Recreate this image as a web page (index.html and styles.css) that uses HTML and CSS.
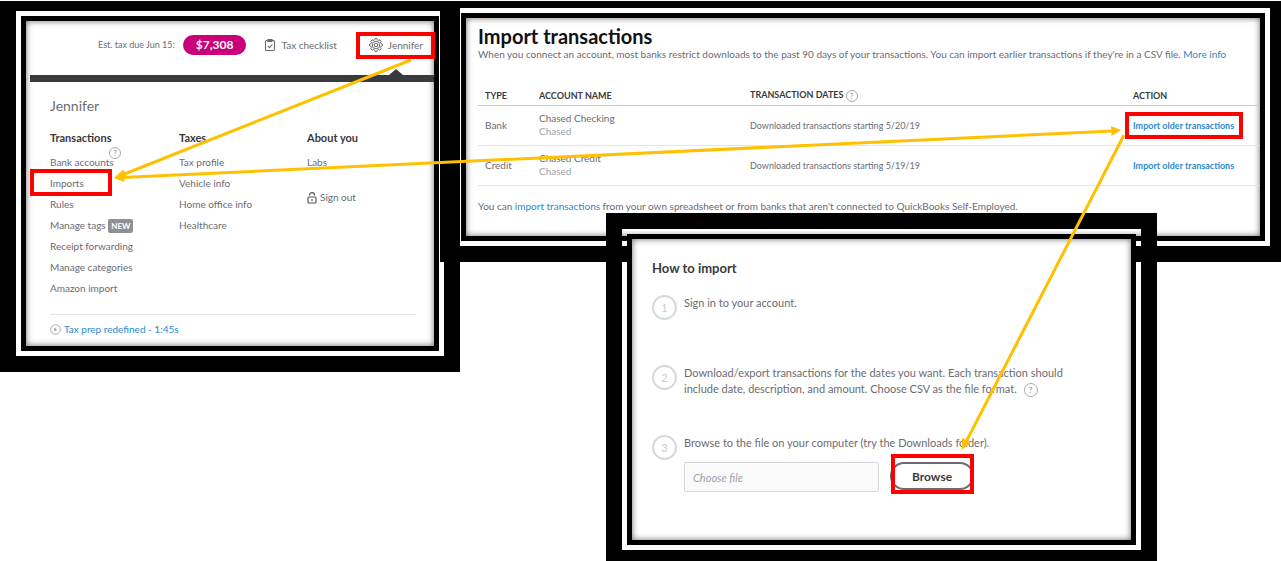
FILE: index.html
```html
<!DOCTYPE html>
<html lang="en">
<head>
  <meta charset="UTF-8" />
  <title>Import older transactions</title>
  <link rel="stylesheet" href="styles.css">
</head>
<body>
  <main class="canvas">

    <!-- Settings menu -->
    <section class="frame frame-menu">
      <div class="screen">
        <header class="topbar">
          <span class="tax-due">Est. tax due Jun 15:</span>
          <a class="amount" href="#">$7,308</a>
          <a class="top-link checklist" href="#">
            <svg width="12" height="14" viewBox="0 0 12 14" fill="none" stroke="#6b6c72" stroke-width="1.1">
              <rect x="1.5" y="2.5" width="9" height="10" rx="1" />
              <path d="M4 3.5V1.5h4v2z" fill="#6b6c72" />
              <path d="M4 8l1.5 1.6L8.3 6.5" />
            </svg>
            Tax checklist
          </a>
          <a class="top-link profile" href="#">
            <svg width="14" height="14" viewBox="0 0 14 14" fill="none" stroke="#6b6c72" stroke-width="1">
              <path d="M5.7 1.8 6.1.6h1.8l.4 1.2 1.5.6 1.1-.5 1.3 1.3-.6 1.1.6 1.5 1.2.4v1.6l-1.2.4-.6 1.5.6 1.1-1.3 1.3-1.1-.6-1.5.7-.4 1.2H6.1l-.4-1.2-1.5-.7-1.1.6-1.3-1.3.6-1.1-.6-1.5-1.2-.4V6.2l1.2-.4.6-1.5-.6-1.1 1.3-1.3 1.1.5z" />
              <circle cx="7" cy="7" r="3.8" />
              <circle cx="7" cy="7" r="1.8" />
            </svg>
            Jennifer
          </a>
        </header>
        <div class="menu">
          <h2 class="menu-name">Jennifer</h2>
          <nav class="menu-columns">
            <div>
              <h3>Transactions</h3>
              <ul>
                <li class="has-help"><a href="#">Bank accounts</a><button class="help help-over" aria-label="Help">?</button></li>
                <li><a href="#">Imports</a></li>
                <li><a href="#">Rules</a></li>
                <li><a href="#">Manage tags</a> <span class="badge">NEW</span></li>
                <li><a href="#">Receipt forwarding</a></li>
                <li><a href="#">Manage categories</a></li>
                <li><a href="#">Amazon import</a></li>
              </ul>
            </div>
            <div>
              <h3>Taxes</h3>
              <ul>
                <li><a href="#">Tax profile</a></li>
                <li><a href="#">Vehicle info</a></li>
                <li><a href="#">Home office info</a></li>
                <li><a href="#">Healthcare</a></li>
              </ul>
            </div>
            <div>
              <h3>About you</h3>
              <ul>
                <li><a href="#">Labs</a></li>
                <li class="sign-out">
                  <a href="#">
                    <svg width="10" height="12" viewBox="0 0 10 12" fill="none" stroke="#55565b" stroke-width="1.2">
                      <rect x="1" y="5" width="8" height="6" rx="1" />
                      <path d="M2.5 3.5V3a2.5 2.3 0 0 1 5 0v.5M5 7v2" />
                    </svg>
                    Sign out
                  </a>
                </li>
              </ul>
            </div>
          </nav>
          <a class="video-link" href="#">
            <svg width="11" height="11" viewBox="0 0 11 11">
              <circle cx="5.5" cy="5.5" r="4.8" fill="none" stroke="#a9abb0" />
              <path d="M4.3 3.7v3.6l2.8-1.8z" fill="#8d9096" />
            </svg>
            Tax prep redefined - 1:45s
          </a>
        </div>
      </div>
    </section>

    <!-- Import transactions -->
    <section class="frame frame-import">
      <div class="screen import">
        <h1>Import transactions</h1>
        <p>When you connect an account, most banks restrict downloads to the past 90 days of your transactions. You can import earlier transactions if they're in a CSV file. <a href="#">More info</a></p>
        <table>
          <thead>
            <tr>
              <th class="col-type">Type</th>
              <th class="col-name">Account name</th>
              <th class="col-dates">Transaction dates <button class="help" aria-label="Help">?</button></th>
              <th>Action</th>
            </tr>
          </thead>
          <tbody>
            <tr>
              <td>Bank</td>
              <td>Chased Checking<br><span class="muted">Chased</span></td>
              <td class="dates">Downloaded transactions starting 5/20/19</td>
              <td><a class="action" href="#">Import older transactions</a></td>
            </tr>
            <tr>
              <td>Credit</td>
              <td>Chased Credit<br><span class="muted">Chased</span></td>
              <td class="dates">Downloaded transactions starting 5/19/19</td>
              <td><a class="action" href="#">Import older transactions</a></td>
            </tr>
          </tbody>
        </table>
        <p>You can <a href="#">import transactions</a> from your own spreadsheet or from banks that aren't connected to QuickBooks Self-Employed.</p>
      </div>
    </section>

    <!-- How to import -->
    <section class="frame frame-steps">
      <div class="screen steps">
        <h2>How to import</h2>
        <ol>
          <li><span class="number">1</span><div>Sign in to your account.</div></li>
          <li><span class="number">2</span><div>Download/export transactions for the dates you want. Each transaction should<br>include date, description, and amount. Choose CSV as the file format. <button class="help help-large" aria-label="Help">?</button></div></li>
          <li>
            <span class="number">3</span>
            <div>
              <label for="file">Browse to the file on your computer (try the Downloads folder).</label>
              <div class="file-row">
                <input type="text" id="file" placeholder="Choose file">
                <button class="browse">Browse</button>
              </div>
            </div>
          </li>
        </ol>
      </div>
    </section>

    <!-- Highlights and arrows over the screens -->
    <svg class="marks" width="1281" height="561" viewBox="0 0 1281 561" aria-hidden="true">
      <g fill="none" stroke="#ff0000" stroke-width="4">
        <rect x="358" y="34" width="75" height="23" />
        <rect x="32" y="171" width="78" height="23" />
        <rect x="1127" y="114" width="114" height="23" />
        <rect x="893" y="456" width="79" height="36" />
      </g>
      <g stroke="#ffc000" stroke-width="3">
        <path d="M411 60 122 175M122 177.500 1113 131M1124 135 966 442" />
      </g>
      <g fill="#ffc000">
        <path d="M114 178 123.500 169.500 127 178.500z" />
        <path d="M114 178 124 173 124.500 182z" />
        <path d="M1121 130 1111 126 1111.500 136z" />
        <path d="M962 450 962 438 971 442z" />
      </g>
    </svg>
  </main>
</body>
</html>
```

FILE: styles.css
```css
* {
  box-sizing: border-box;
}
body {
  margin: 0;
  background: #fff;
  color: #6b6c72;
  font-family: Lato, sans-serif;
  font-size: 10px;
  line-height: 16px;
}
h1, h2, h3, p, ul, ol {
  margin: 0;
  padding: 0;
}
ul, ol {
  list-style: none;
}
a {
  color: #2b8acb;
  text-decoration: none;
}
button, input {
  font-family: inherit;
}
.canvas {
  position: relative;
  min-height: 100vh;
  overflow: hidden;
  border-top: 1px solid #fff;
}

/* double black frame, the gap between the lines is see-through */
.frame {
  position: absolute;
  display: grid;
  padding: 5px;
  border: 16px solid #000;
}
.frame-menu {
  left: 0;
  top: -6px;
  width: 460px;
  min-height: 377px;
}
.frame-import {
  left: 440px;
  top: -9px;
  width: 846px;
  min-height: 270px;
}
.frame-steps {
  left: 606px;
  top: 212px;
  width: 551px;
  min-height: 353px;
}
.screen {
  border: 5px solid #000;
  background: #fff;
  box-shadow: inset 0 0 6px rgba(0, 0, 0, 0.6);
}

.topbar {
  display: flex;
  align-items: center;
  justify-content: flex-end;
  height: 54px;
  padding: 0 11px 7px 0;
}
.tax-due {
  margin-right: 8px;
  font-size: 9px;
}
.amount {
  padding: 2px 13px;
  border-radius: 10px;
  background: #c9007a;
  color: #fff;
  font-size: 12px;
  font-weight: bold;
}
.top-link {
  display: flex;
  align-items: center;
  gap: 5px;
  color: #6b6c72;
}
.checklist {
  margin: 0 32px 0 18px;
}
.menu {
  position: relative;
  margin-left: 4px;
  padding: 16px 18px 0 20px;
  border-top: 7px solid #393a3d;
}
.menu::before {
  content: "";
  position: absolute;
  right: 31px;
  top: -13px;
  border: 7px solid transparent;
  border-top: 0;
  border-bottom: 6px solid #393a3d;
}
.menu-name {
  font-size: 14px;
  font-weight: normal;
}
.menu-columns {
  display: grid;
  grid-template-columns: 129px 128px 1fr;
  height: 184px;
  margin-top: 16px;
}
.menu h3 {
  margin-bottom: 6px;
  color: #393a3d;
  font-size: 11px;
}
.menu li {
  height: 21px;
  line-height: 21px;
}
.menu li a {
  color: #6b6c72;
}
.has-help {
  position: relative;
}
.help {
  display: inline-flex;
  align-items: center;
  justify-content: center;
  width: 12px;
  height: 12px;
  padding: 0;
  border: 1px solid #a9abb0;
  border-radius: 50%;
  background: none;
  color: #8d9096;
  font-size: 8px;
  line-height: 8px;
  vertical-align: middle;
}
.help-over {
  position: absolute;
  left: 59px;
  top: -5px;
}
.help-large {
  width: 14px;
  height: 14px;
  margin-left: 4px;
}
.badge {
  padding: 2px 3px;
  border-radius: 2px;
  background: #8d9096;
  color: #fff;
  font-size: 8px;
  font-weight: bold;
}
.menu .sign-out {
  margin-top: 14px;
}
.sign-out a {
  display: flex;
  align-items: center;
  gap: 3px;
}
.video-link {
  display: flex;
  align-items: center;
  gap: 3px;
  padding-top: 6px;
  border-top: 1px solid #e3e5e8;
}

.import {
  padding: 8px 0 0 12px;
}
.import h1 {
  color: #111;
  font-size: 20px;
  line-height: 20px;
}
table {
  width: 100%;
  margin: 24px 0 12px;
  border-collapse: collapse;
  line-height: 13px;
}
th, td {
  height: 40px;
  padding: 0 0 0 7px;
  border-bottom: 1px solid #e3e5e8;
  text-align: left;
}
th {
  height: 19px;
  border-color: #c9cbd3;
  color: #393a3d;
  font-size: 9px;
  text-transform: uppercase;
}
.col-type {
  width: 54px;
}
.col-name {
  width: 211px;
}
.col-dates {
  width: 383px;
}
.muted {
  color: #a0a2a8;
}
.dates, .action {
  font-size: 9px;
}
.action {
  font-weight: bold;
}

.steps {
  padding: 21px 20px 0;
  font-size: 11px;
}
.steps h2 {
  margin-bottom: 19px;
  color: #393a3d;
  font-size: 13px;
}
.steps li {
  display: flex;
  gap: 7px;
  min-height: 70px;
}
.number {
  flex: none;
  width: 25px;
  height: 25px;
  border: 2px solid #d4d7dc;
  border-radius: 50%;
  color: #c8cbd1;
  line-height: 21px;
  text-align: center;
}
.file-row {
  display: flex;
  gap: 11px;
  margin-top: 11px;
}
.file-row input {
  width: 195px;
  height: 30px;
  padding: 0 8px;
  border: 1px solid #d4d7dc;
  border-radius: 2px;
  background: #fafafa;
  font-size: 11px;
}
.file-row input::placeholder {
  color: #a0a2a8;
  font-style: italic;
}
.browse {
  width: 84px;
  height: 28px;
  border: 2px solid #6b6c72;
  border-radius: 14px;
  background: #fff;
  color: #393a3d;
  font-size: 12px;
  font-weight: bold;
}

.marks {
  position: absolute;
  left: 0;
  top: -1px;
  pointer-events: none;
}
```
